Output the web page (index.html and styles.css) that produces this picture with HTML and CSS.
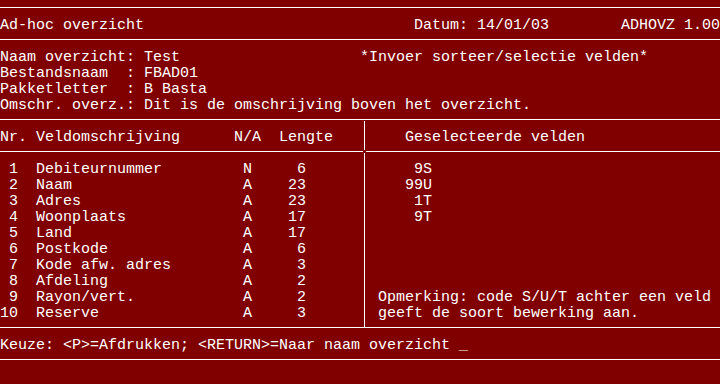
FILE: index.html
```html
<!DOCTYPE html>
<html lang="nl">
<head>
<meta charset="utf-8">
<title>Ad-hoc overzicht</title>
<link rel="stylesheet" href="styles.css">
</head>
<body>
<div class="screen">
  <div class="rule"></div>
  <div class="row title"><span>Ad-hoc overzicht</span><span>Datum: 14/01/03</span><span>ADHOVZ 1.00</span></div>
  <div class="rule"></div>
  <div class="row info-head"><span>Naam overzicht: Test</span><span>*Invoer sorteer/selectie velden*</span></div>
  <div class="row">Bestandsnaam  : FBAD01</div>
  <div class="row">Pakketletter  : B Basta</div>
  <div class="row">Omschr. overz.: Dit is de omschrijving boven het overzicht.</div>

  <div class="split">
    <div class="col">
      <div class="rule"></div>
      <div class="row">Nr. Veldomschrijving      N/A  Lengte</div>
      <div class="rule"></div>
      <div class="row item"><span class="nr">1</span><span class="name">Debiteurnummer</span><span>N</span><span class="len">6</span></div>
      <div class="row item"><span class="nr">2</span><span class="name">Naam</span><span>A</span><span class="len">23</span></div>
      <div class="row item"><span class="nr">3</span><span class="name">Adres</span><span>A</span><span class="len">23</span></div>
      <div class="row item"><span class="nr">4</span><span class="name">Woonplaats</span><span>A</span><span class="len">17</span></div>
      <div class="row item"><span class="nr">5</span><span class="name">Land</span><span>A</span><span class="len">17</span></div>
      <div class="row item"><span class="nr">6</span><span class="name">Postkode</span><span>A</span><span class="len">6</span></div>
      <div class="row item"><span class="nr">7</span><span class="name">Kode afw. adres</span><span>A</span><span class="len">3</span></div>
      <div class="row item"><span class="nr">8</span><span class="name">Afdeling</span><span>A</span><span class="len">2</span></div>
      <div class="row item"><span class="nr">9</span><span class="name">Rayon/vert.</span><span>A</span><span class="len">2</span></div>
      <div class="row item"><span class="nr">10</span><span class="name">Reserve</span><span>A</span><span class="len">3</span></div>
      <div class="rule"></div>
    </div>
    <svg class="divider" width="9" height="224" viewBox="0 0 9 224" shape-rendering="crispEdges" aria-hidden="true">
      <g stroke="#fff" stroke-width="1">
        <line x1="0" y1="7.5" x2="9" y2="7.5"/>
        <line x1="4.5" y1="9" x2="4.5" y2="38"/>
        <line x1="0" y1="39.5" x2="3" y2="39.5"/>
        <line x1="6" y1="39.5" x2="9" y2="39.5"/>
        <line x1="4.5" y1="41" x2="4.5" y2="215"/>
        <line x1="0" y1="215.5" x2="9" y2="215.5"/>
      </g>
    </svg>
    <div class="col">
      <div class="rule"></div>
      <div class="row right-head">Geselecteerde velden</div>
      <div class="rule"></div>
      <div class="row sel"><span class="code">9S</span></div>
      <div class="row sel"><span class="code">99U</span></div>
      <div class="row sel"><span class="code">1T</span></div>
      <div class="row sel"><span class="code">9T</span></div>
      <div class="spacer"></div>
      <div class="row note">Opmerking: code S/U/T achter een veld</div>
      <div class="row note">geeft de soort bewerking aan.</div>
      <div class="rule"></div>
    </div>
  </div>

  <div class="row">Keuze: &lt;P&gt;=Afdrukken; &lt;RETURN&gt;=Naar naam overzicht _</div>
  <div class="rule"></div>
  <div class="row"></div>
</div>
</body>
</html>
```
FILE: styles.css
```css
html, body {
  margin: 0;
  padding: 0;
  background: #800000;
}

body {
  width: 720px;
  height: 384px;
  overflow: hidden;
}

.screen {
  width: 720px;
  height: 384px;
  display: flex;
  flex-direction: column;
  background: #800000;
  color: #ffffff;
  font-family: "Liberation Mono", "DejaVu Sans Mono", monospace;
  font-size: 15px;
  white-space: pre;
}

.row {
  height: 16px;
  flex: none;
  box-sizing: border-box;
  padding-top: 3px;
  line-height: 14px;
  overflow: visible;
}

.rule {
  height: 16px;
  flex: none;
  background: linear-gradient(#ffffff, #ffffff) 0 7px / 100% 1px no-repeat;
}

.title {
  display: grid;
  grid-template-columns: 46ch 23ch 11ch;
}

.info-head {
  display: grid;
  grid-template-columns: 40ch 40ch;
}

.split {
  display: grid;
  grid-template-columns: 360px 9px 351px;
  height: 224px;
  flex: none;
}

.col {
  display: flex;
  flex-direction: column;
  height: 224px;
}

.divider {
  display: block;
}

.item {
  display: grid;
  grid-template-columns: 2ch 25ch 1ch 6ch;
  grid-template-rows: 14px;
}

.item .nr,
.item .len {
  text-align: right;
}

.item .name {
  padding-left: 2ch;
}

.right-head {
  padding-left: 4ch;
}

.sel .code {
  display: inline-block;
  width: 7ch;
  text-align: right;
}

.spacer {
  flex: 1;
}

.note {
  padding-left: 1ch;
}
```
